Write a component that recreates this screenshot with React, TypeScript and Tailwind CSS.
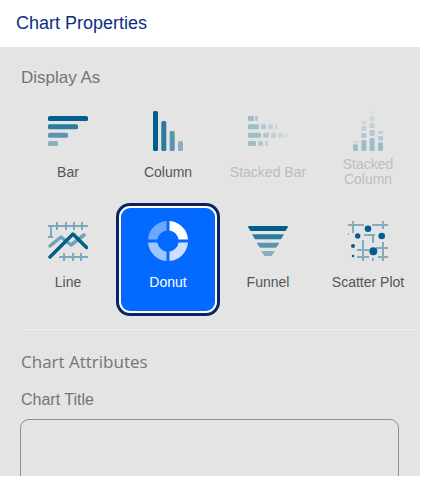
const DARK = "#005f8c";

function BarIcon() {
  return (
    <svg width="40" height="40" viewBox="0 0 40 40">
      <rect x="0" y="5" width="40" height="5" rx="1.5" fill={DARK} />
      <rect x="0" y="13.3" width="30" height="5" rx="1.5" fill={DARK} opacity="0.8" />
      <rect x="0" y="21.7" width="20" height="5" rx="1.5" fill={DARK} opacity="0.6" />
      <rect x="0" y="30" width="10" height="5" rx="1.5" fill={DARK} opacity="0.4" />
    </svg>
  );
}

function ColumnIcon() {
  return (
    <svg width="40" height="40" viewBox="0 0 40 40">
      <rect x="5" y="0" width="5" height="40" rx="1.5" fill={DARK} />
      <rect x="13.3" y="10" width="5" height="30" rx="1.5" fill={DARK} opacity="0.8" />
      <rect x="21.7" y="20" width="5" height="20" rx="1.5" fill={DARK} opacity="0.6" />
      <rect x="30" y="30" width="5" height="10" rx="1.5" fill={DARK} opacity="0.4" />
    </svg>
  );
}

function StackedBarIcon() {
  const rows: [number, number, number][][] = [
    [[0, 6, 0.3], [7, 3, 0.22]],
    [[0, 11, 0.3], [13, 5, 0.22], [20, 5, 0.15], [27, 3, 0.1]],
    [[0, 13, 0.3], [15, 6, 0.22], [23, 5, 0.15], [30, 5, 0.1], [36, 4, 0.05]],
    [[0, 8, 0.3], [10, 5, 0.22], [17, 3, 0.15]],
  ];
  return (
    <svg width="40" height="40" viewBox="0 0 40 40">
      {rows.map((row, i) =>
        row.map(([x, w, o], j) => (
          <rect key={`${i}-${j}`} x={x} y={5 + i * 8.33} width={w} height="5" rx="1.2" fill={DARK} opacity={o} />
        )),
      )}
    </svg>
  );
}

function StackedColumnIcon() {
  const cols: [number, number, number][][] = [
    [[33.3, 6.7, 0.3], [30, 2.5, 0.1]],
    [[29, 11, 0.3], [22, 5, 0.22], [15, 5, 0.15], [10, 3, 0.1]],
    [[27, 13, 0.3], [19, 6, 0.22], [12, 5, 0.15], [5, 5, 0.1], [0, 3, 0.05]],
    [[31.3, 8.7, 0.3], [25, 4.5, 0.22], [20, 3, 0.15]],
  ];
  return (
    <svg width="40" height="40" viewBox="0 0 40 40">
      {cols.map((col, i) =>
        col.map(([y, h, o], j) => (
          <rect key={`${i}-${j}`} x={5 + i * 8.33} y={y} width="5" height={h} rx="1.2" fill={DARK} opacity={o} />
        )),
      )}
    </svg>
  );
}

function LineIcon() {
  return (
    <svg width="40" height="40" viewBox="0 0 40 40" fill="none" strokeLinejoin="round">
      <g stroke={DARK} strokeOpacity="0.45" strokeWidth="2">
        <path d="M0 5H40M3 5V16M0 16H5M9 1V9M18 1V9M26 1V9M34 1V9" />
        <path d="M11 36H40M16 32V40M25 32V40M33 32V40" />
      </g>
      <path d="M2 25L13 16L23 24L36 14" stroke={DARK} strokeOpacity="0.5" strokeWidth="3.5" strokeLinecap="round" />
      <path d="M2 36L25 13L38.5 26.5" stroke={DARK} strokeWidth="3.5" strokeLinecap="round" />
    </svg>
  );
}

function DonutIcon() {
  return (
    <svg width="40" height="40" viewBox="0 0 40 40">
      <path d="M18.5 0V9.4A10.7 10.7 0 0 0 9.4 18.5H0A20 20 0 0 1 18.5 0Z" fill="#fff" opacity="0.42" />
      <path d="M21.5 0A20 20 0 0 1 40 18.5H30.6A10.7 10.7 0 0 0 21.5 9.4Z" fill="#fff" />
      <path d="M40 21.5A20 20 0 0 1 21.5 40V30.6A10.7 10.7 0 0 0 30.6 21.5Z" fill="#fff" opacity="0.8" />
      <path d="M18.5 40A20 20 0 0 1 0 21.5H9.4A10.7 10.7 0 0 0 18.5 30.6Z" fill="#fff" opacity="0.62" />
    </svg>
  );
}

function FunnelIcon() {
  return (
    <svg width="40" height="40" viewBox="0 0 40 40">
      <path d="M1 5H39Q40.5 5 39.5 7L37.5 10H2.5L0.5 7Q-0.5 5 1 5Z" fill={DARK} />
      <path d="M4 13.3H36L33 18.3H7Z" fill={DARK} opacity="0.8" />
      <path d="M8.5 21.7H31.5L28 26.7H12Z" fill={DARK} opacity="0.6" />
      <path d="M13 30H27L23.5 35H16.5Z" fill={DARK} opacity="0.4" />
    </svg>
  );
}

function ScatterIcon() {
  return (
    <svg width="40" height="40" viewBox="0 0 40 40" fill="none">
      <g stroke={DARK} strokeOpacity="0.42" strokeWidth="2">
        <path d="M0 4H16M5 0V12M24 4H40M35 0V8" />
        <path d="M16 14H27M25 14V22M0 12V14" />
        <path d="M9 29H21M9 36H21M15 19V40M35 21V40M28 27H40M30 36H40M25 37V40" />
      </g>
      <g fill={DARK}>
        <circle cx="20" cy="7.7" r="3.3" />
        <circle cx="9.7" cy="15" r="2.7" />
        <circle cx="33.7" cy="15" r="3.3" />
        <circle cx="5" cy="25" r="2" />
        <circle cx="25.3" cy="30.3" r="4" />
        <circle cx="5" cy="35" r="1.3" />
      </g>
    </svg>
  );
}

function Tile({ icon, label, disabled, selected }: { icon: React.ReactNode; label: string; disabled?: boolean; selected?: boolean }) {
  if (selected) {
    return (
      <div className="flex h-[110px] flex-col items-center">
        <div className="-mt-[5px] flex h-[113px] w-[104px] flex-col items-center rounded-[14px] border-[3px] border-[#0a2463] bg-white p-[2px]">
          <div className="flex h-[103px] w-[94px] flex-col items-center rounded-[9px] bg-[#0469ff] pt-[13px]">
            <span className="block h-10 w-10">{icon}</span>
            <span className="mt-[13px] text-[14px] leading-4 text-white">{label}</span>
          </div>
        </div>
      </div>
    );
  }
  return (
    <div className="flex h-[110px] flex-col items-center pt-[13px]">
      <span className="block h-10 w-10">{icon}</span>
      <span className={`mt-[6px] flex h-[30px] w-[90px] items-center justify-center text-center text-[14px] leading-[15px] ${disabled ? "text-[#bdbdbd]" : "text-[#555555]"}`}>{label}</span>
    </div>
  );
}

export default function App() {
  return (
    <div className="h-[479px] w-[422px] overflow-hidden bg-white font-['Liberation_Sans',Arial,sans-serif]">
      <div className="flex h-[47px] items-center pl-4 text-[18px] text-[#0b2f7f]">Chart Properties</div>
      <div className="h-[429px] w-[420px] overflow-hidden bg-[#e4e4e4]">
        <div className="pl-[21px] pt-[20px] text-[17px] leading-[22px] text-[#757575]">Display As</div>
        <div className="mt-[9px] grid grid-cols-[repeat(4,100px)] pl-[18px]">
          <Tile icon={<BarIcon />} label="Bar" />
          <Tile icon={<ColumnIcon />} label="Column" />
          <Tile icon={<StackedBarIcon />} label="Stacked Bar" disabled />
          <Tile icon={<StackedColumnIcon />} label="Stacked Column" disabled />
          <Tile icon={<LineIcon />} label="Line" />
          <Tile icon={<DonutIcon />} label="Donut" selected />
          <Tile icon={<FunnelIcon />} label="Funnel" />
          <Tile icon={<ScatterIcon />} label="Scatter Plot" />
        </div>
        <div className="ml-[21px] mt-[11px] h-px w-[395px] bg-[#f0f0f0]" />
        <div className="pl-[21px] pt-[20px] font-['Open_Sans',sans-serif] text-[17px] leading-6 text-[#757575]">Chart Attributes</div>
        <div className="pl-[21px] pt-[16px] text-[16px] leading-5 text-[#757575]">Chart Title</div>
        <div className="ml-[20px] mt-[9px] h-[100px] w-[379px] rounded-[9px] border border-[#8f8f8f]" />
      </div>
    </div>
  );
}
